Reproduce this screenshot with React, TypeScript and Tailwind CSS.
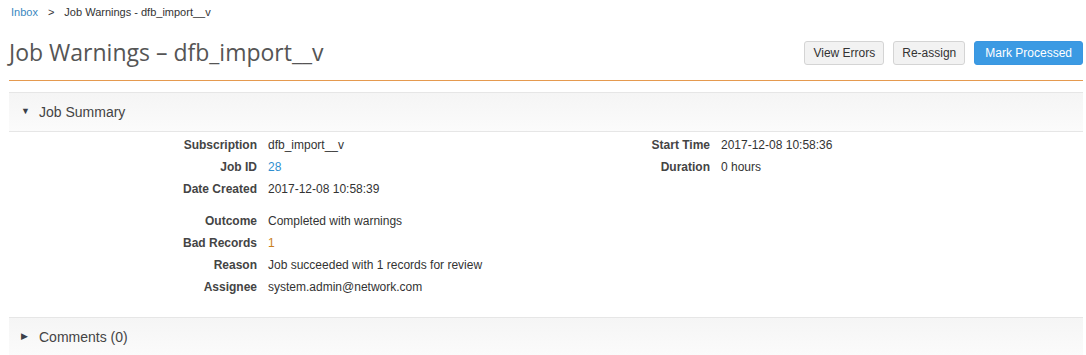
const summaryLeft = [
  { label: "Subscription", value: "dfb_import__v" },
  { label: "Job ID", value: "28", tone: "link" },
  { label: "Date Created", value: "2017-12-08 10:58:39" },
];

const summaryLeft2 = [
  { label: "Outcome", value: "Completed with warnings" },
  { label: "Bad Records", value: "1", tone: "warn" },
  { label: "Reason", value: "Job succeeded with 1 records for review" },
  { label: "Assignee", value: "system.admin@network.com" },
];

const summaryRight = [
  { label: "Start Time", value: "2017-12-08 10:58:36" },
  { label: "Duration", value: "0 hours" },
];

type Row = { label: string; value: string; tone?: string };

function Field({ row, labelWidth }: { row: Row; labelWidth: string }) {
  const valueColor =
    row.tone === "link"
      ? "text-[#2f8fd0]"
      : row.tone === "warn"
        ? "text-[#c9801c]"
        : "text-[#333]";
  return (
    <div className="flex h-[22px] items-center whitespace-nowrap">
      <div className={`${labelWidth} shrink-0 pr-[11px] text-right font-bold text-[#444]`}>
        {row.label}
      </div>
      <div className={valueColor}>{row.value}</div>
    </div>
  );
}

function SectionHeader({ title, open }: { title: string; open: boolean }) {
  return (
    <div className="flex h-[40px] items-center border-y border-[#e6e6e6] bg-gradient-to-b from-[#f5f5f5] to-[#fbfbfb] pl-[12px] text-[14px] text-[#444]">
      <span className="w-[18px] text-[9px] text-[#3a3f48]">{open ? "▼" : "▶"}</span>
      <span>{title}</span>
    </div>
  );
}

export default function App() {
  return (
    <div className="min-h-[355px] bg-white font-['Liberation_Sans',Arial,sans-serif] text-[12px]">
      <div className="ml-[9px] mr-[3px]">
        <div className="flex h-[24px] items-center pl-[2px] text-[11px] text-[#333]">
          <a className="text-[#3a87c0]">Inbox</a>
          <span className="mx-[10px]">&gt;</span>
          <span>Job Warnings - dfb_import__v</span>
        </div>

        <div className="flex h-[57px] items-center justify-between border-b border-[#e59a4f]">
          <h1 className="font-['Open_Sans',sans-serif] text-[23px] text-[#555]">
            Job Warnings – dfb_import__v
          </h1>
          <div className="flex gap-[9px] pt-[2px]">
            <button className="h-[24px] rounded-[3px] border border-[#d4d4d4] bg-[#f2f2f2] px-[8px] text-[12px] text-[#333]">
              View Errors
            </button>
            <button className="h-[24px] rounded-[3px] border border-[#d4d4d4] bg-[#f2f2f2] px-[8px] text-[12px] text-[#333]">
              Re-assign
            </button>
            <button className="h-[24px] rounded-[3px] border border-[#3a96e0] bg-[#3b9ae3] px-[10px] text-[12px] text-white">
              Mark Processed
            </button>
          </div>
        </div>

        <div className="mt-[11px]">
          <SectionHeader title="Job Summary" open />
          <div className="flex pb-[19px] pt-[2px]">
            <div className="w-[452px]">
              {summaryLeft.map((r) => (
                <Field key={r.label} row={r} labelWidth="w-[259px]" />
              ))}
              <div className="h-[10px]" />
              {summaryLeft2.map((r) => (
                <Field key={r.label} row={r} labelWidth="w-[259px]" />
              ))}
            </div>
            <div>
              {summaryRight.map((r) => (
                <Field key={r.label} row={r} labelWidth="w-[260px]" />
              ))}
            </div>
          </div>
          <SectionHeader title="Comments (0)" open={false} />
        </div>
      </div>
    </div>
  );
}
